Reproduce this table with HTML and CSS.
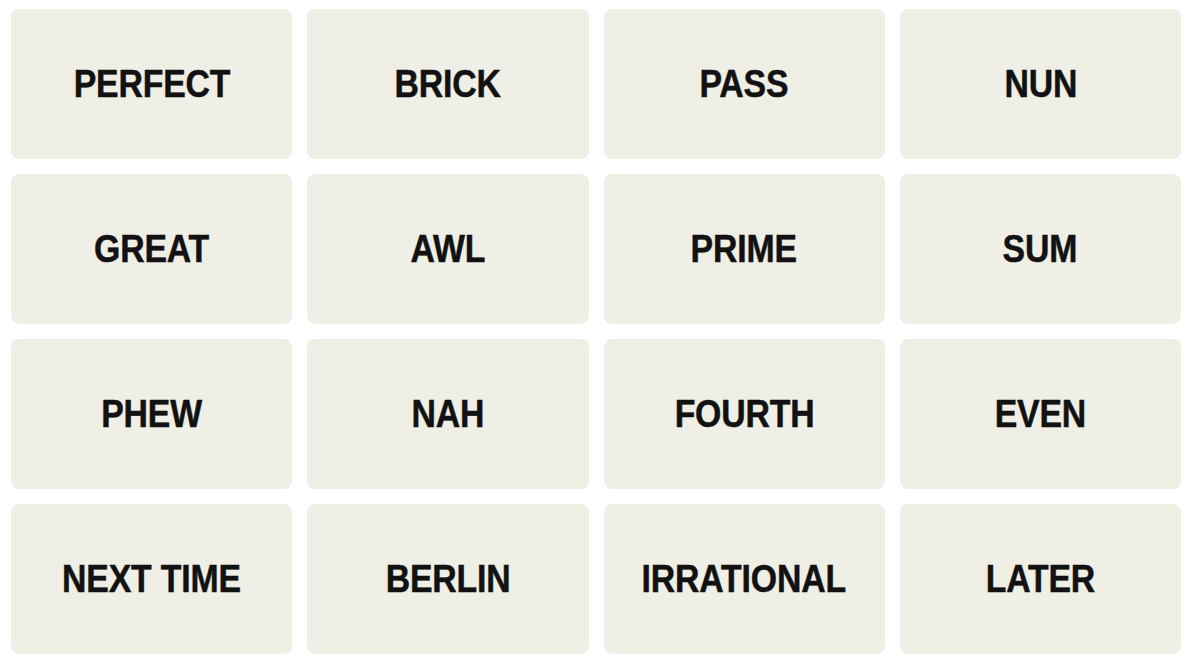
FILE: index.html
```html
<!DOCTYPE html>
<html>
<head>
<meta charset="utf-8">
<link rel="stylesheet" href="styles.css">
</head>
<body>
<div class="board">
  <div class="tile"><span class="word">PERFECT</span></div>
  <div class="tile"><span class="word">BRICK</span></div>
  <div class="tile"><span class="word">PASS</span></div>
  <div class="tile"><span class="word">NUN</span></div>
  <div class="tile"><span class="word">GREAT</span></div>
  <div class="tile"><span class="word">AWL</span></div>
  <div class="tile"><span class="word">PRIME</span></div>
  <div class="tile"><span class="word">SUM</span></div>
  <div class="tile"><span class="word">PHEW</span></div>
  <div class="tile"><span class="word">NAH</span></div>
  <div class="tile"><span class="word">FOURTH</span></div>
  <div class="tile"><span class="word">EVEN</span></div>
  <div class="tile"><span class="word">NEXT TIME</span></div>
  <div class="tile"><span class="word">BERLIN</span></div>
  <div class="tile"><span class="word">IRRATIONAL</span></div>
  <div class="tile"><span class="word">LATER</span></div>
</div>
</body>
</html>
```
FILE: styles.css
```css
html, body {
  margin: 0;
  background: #ffffff;
}
body {
  padding: 9px 15px 0 11px;
}
.board {
  width: 1170px;
  display: grid;
  grid-template-columns: repeat(4, 1fr);
  grid-auto-rows: 150px;
  gap: 15px;
}
.tile {
  background: #efefe6;
  border-radius: 8px;
  display: flex;
  align-items: center;
  justify-content: center;
  font-family: "Liberation Sans", Arial, sans-serif;
  font-weight: 700;
  font-size: 38px;
  color: #121212;
  text-transform: uppercase;
}
.word {
  display: inline-block;
  transform: scaleX(0.89);
  letter-spacing: -0.2px;
  -webkit-text-stroke: 0.5px #121212;
}
```
